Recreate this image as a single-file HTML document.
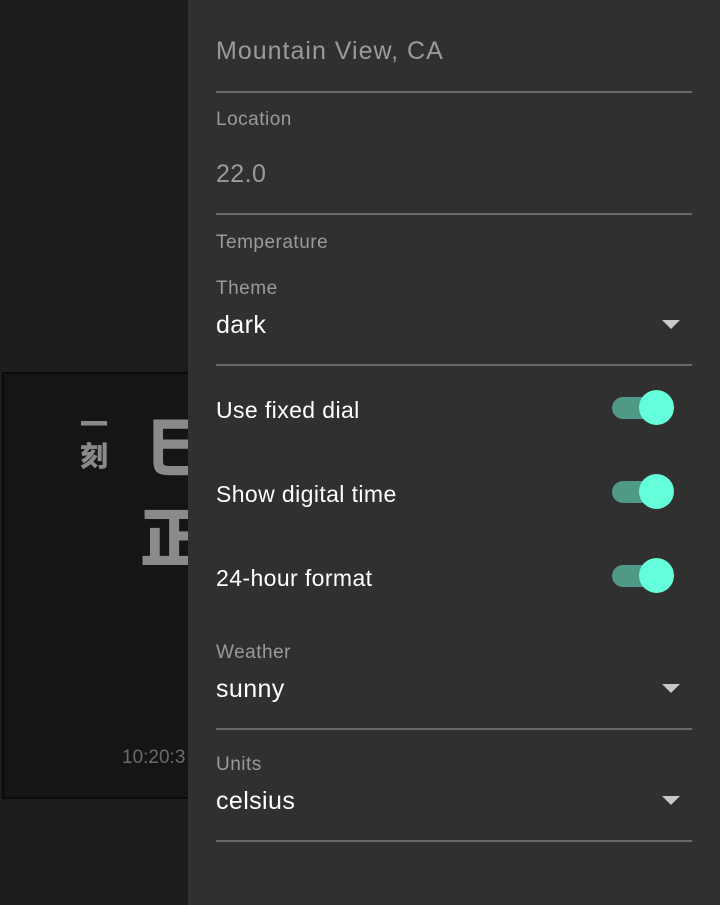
<!DOCTYPE html>
<html><head><meta charset="utf-8"><style>
body{margin:0;width:720px;height:905px;background:#1c1c1c;position:relative;overflow:hidden;font-family:"Liberation Sans","Noto Sans CJK SC",sans-serif}
.card{position:absolute;left:2px;top:372px;width:200px;height:427px;background:#151515;border:2px solid #0b0b0b;box-sizing:border-box}
.cj{position:absolute;color:#8a8a8a;font-family:"Noto Sans CJK SC",sans-serif;font-weight:900}
.panel{position:absolute;left:188px;top:0;width:532px;height:905px;background:#303030}
.t{position:absolute;left:28px;font-size:23px;letter-spacing:0.4px}
.lab{position:absolute;left:28px;font-size:19px;color:#9a9a9a;letter-spacing:0.5px}
.line{position:absolute;left:28px;width:476px;height:2px;background:#6a6a6a}
.arr{position:absolute;left:474px;width:0;height:0;border-left:9px solid transparent;border-right:9px solid transparent;border-top:9px solid #c8c8c8}
.tr{position:absolute;left:424px;width:44px;height:22px;border-radius:11px;background:#4f9987}
.th{position:absolute;left:451px;width:35px;height:35px;border-radius:50%;background:#64ffda}
</style></head><body>
<div class="card"></div>
<div class="cj" style="left:80px;top:407px;font-size:28px;line-height:32px;width:30px">一<br>刻</div>
<div class="cj" style="left:146px;top:398px;font-size:64px">巳</div>
<div class="cj" style="left:140px;top:488px;font-size:64px">正</div>
<div style="position:absolute;left:122px;top:747px;font-size:19px;color:#6a6a6a">10:20:3</div>
<div class="panel">
<div class="t" style="top:37px;color:#9a9a9a;font-size:25px;letter-spacing:1px">Mountain View, CA</div>
<div class="line" style="top:91px"></div>
<div class="lab" style="top:109px">Location</div>
<div class="t" style="top:160px;color:#9a9a9a;font-size:25px">22.0</div>
<div class="line" style="top:213px"></div>
<div class="lab" style="top:232px">Temperature</div>
<div class="lab" style="top:278px">Theme</div>
<div class="t" style="top:311px;color:#fff;font-size:25px">dark</div>
<div class="arr" style="top:320px"></div>
<div class="line" style="top:364px"></div>
<div class="t" style="top:397px;color:#fff">Use fixed dial</div>
<div class="tr" style="top:397px"></div><div class="th" style="top:390px"></div>
<div class="t" style="top:481px;color:#fff">Show digital time</div>
<div class="tr" style="top:481px"></div><div class="th" style="top:474px"></div>
<div class="t" style="top:565px;color:#fff">24-hour format</div>
<div class="tr" style="top:565px"></div><div class="th" style="top:558px"></div>
<div class="lab" style="top:642px">Weather</div>
<div class="t" style="top:675px;color:#fff;font-size:25px">sunny</div>
<div class="arr" style="top:684px"></div>
<div class="line" style="top:728px"></div>
<div class="lab" style="top:754px">Units</div>
<div class="t" style="top:787px;color:#fff;font-size:25px">celsius</div>
<div class="arr" style="top:796px"></div>
<div class="line" style="top:840px"></div>
</div>
</body></html>
